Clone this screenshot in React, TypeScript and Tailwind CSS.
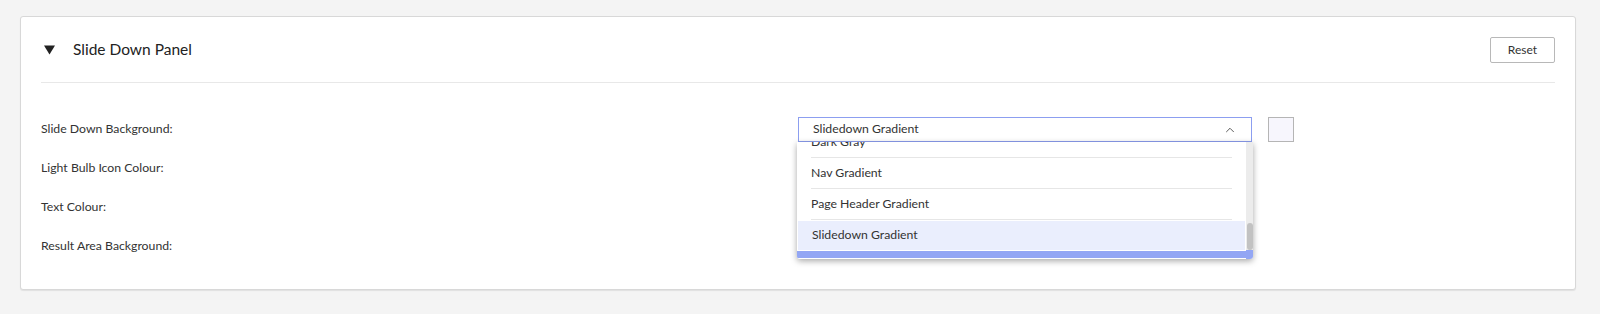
import { ChevronUp } from 'lucide-react';

const rows = ['Slide Down Background:', 'Light Bulb Icon Colour:', 'Text Colour:', 'Result Area Background:'];

const options = ['Dark Gray', 'Nav Gradient', 'Page Header Gradient'];

function Dropdown() {
  return (
    <div className="absolute left-[-1px] top-[25px] w-[456px] h-[117px] bg-white rounded-b-[3px] shadow-[0_2px_6px_rgba(0,0,0,0.35)] overflow-hidden z-10">
      <div className="flex h-full">
        <div className="flex-1 overflow-hidden">
          <div className="-mt-[15px]">
            {options.map(o => (
              <div key={o} className="px-[14px]">
                <div className="h-[31px] flex items-center border-b border-[#e6e6e6] text-[12.25px] text-[#333]">{o}</div>
              </div>
            ))}
            <div className="h-[31px] flex items-center px-[14px] bg-[#eaeefd] border border-white text-[12.25px] text-[#333]">
              Slidedown Gradient
            </div>
            <div className="h-[7px] bg-[#93a6f4]" />
          </div>
        </div>
        <div className="w-[7px] bg-[#ececec] flex flex-col">
          <div className="h-[81px]" />
          <div className="h-[27px] mx-[0.5px] bg-[#c2c2c2] rounded-[3px]" />
          <div className="flex-1 bg-[#93a6f4]" />
        </div>
      </div>
    </div>
  );
}

export default function App() {
  return (
    <div className="min-h-screen bg-[#f4f4f4] pt-[16px] pl-[20px] pr-[24px] pb-[25px] font-['Lato',sans-serif]">
      <div className="bg-white border border-[#d8d8d8] rounded-[3px] shadow-[0_1px_1px_rgba(0,0,0,0.08)] px-[20px]">
        {/* Header */}
        <div className="h-[66px] flex items-center justify-between border-b border-[#e8e8e8]">
          <div className="flex items-center">
            <svg width="11" height="10" viewBox="0 0 11 10" className="ml-[3px]">
              <path d="M0 0.5h11L5.5 9.5z" fill="#222" />
            </svg>
            <span className="ml-[18px] text-[15.5px] text-[#222]">Slide Down Panel</span>
          </div>
          <button className="w-[65px] h-[26px] border border-[#b8b8b8] rounded-[2px] bg-white text-[12px] text-[#333]">Reset</button>
        </div>

        {/* Rows */}
        <div className="pt-[27px] pb-[23px]">
          {rows.map((label, i) => (
            <div key={label} className="grid grid-cols-2 h-[39px] items-center">
              <div className="text-[12.25px] text-[#333]">{label}</div>
              {i === 0 ? (
                <div className="flex items-center gap-[16px]">
                  <div className="relative w-[454px] h-[25px]">
                    <div className="h-full border border-[#8c9ef0] flex items-center justify-between pl-[14px] pr-[14px] text-[12.25px] text-[#333] bg-white">
                      <span>Slidedown Gradient</span>
                      <ChevronUp size={14} strokeWidth={1.5} className="text-[#444]" />
                    </div>
                    <Dropdown />
                  </div>
                  <div className="w-[26px] h-[25px] border border-[#b5b5b5] bg-[#f7f6fd]" />
                </div>
              ) : (
                <div />
              )}
            </div>
          ))}
        </div>
      </div>
    </div>
  );
}
